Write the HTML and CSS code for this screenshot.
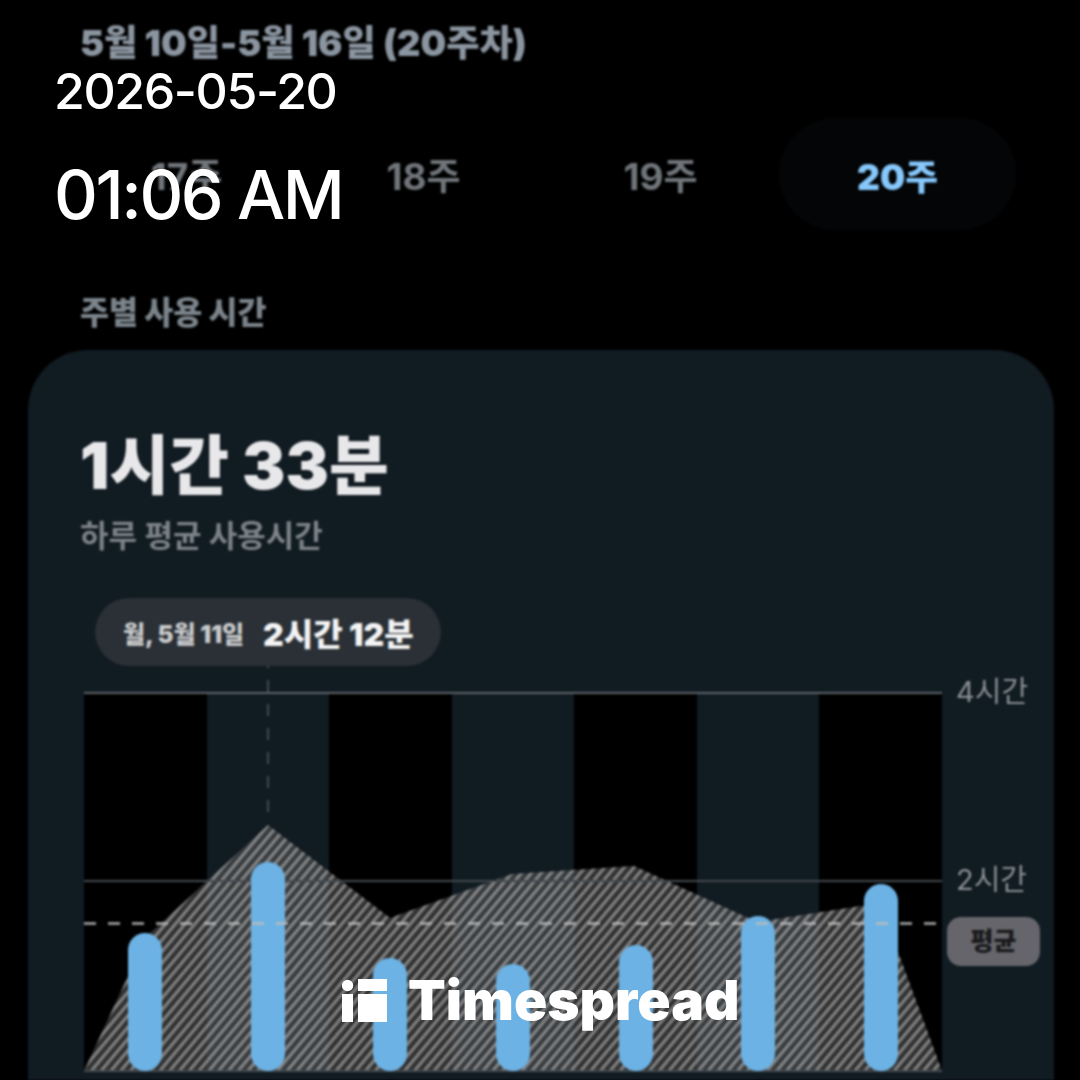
FILE: index.html
```html
<!DOCTYPE html>
<html lang="ko">
<head>
  <meta charset="UTF-8">
  <title>주별 사용 시간</title>
  <link rel="stylesheet" href="styles.css">
</head>
<body>

  <main class="screen">
    <h2 class="date-range">5월 10일-5월 16일 (20주차)</h2>

    <div class="week-tabs">
      <div class="week-tab">17주</div>
      <div class="week-tab">18주</div>
      <div class="week-tab">19주</div>
      <div class="week-tab active">20주</div>
    </div>

    <h3 class="section-title">주별 사용 시간</h3>

    <section class="card">
      <div class="big-time">1시간 33분</div>
      <div class="sub-label">하루 평균 사용시간</div>

      <div class="plot">
        <div class="tooltip">
          <span class="tooltip-date">월, 5월 11일</span>
          <span class="tooltip-value">2시간 12분</span>
        </div>
        <div class="guide"></div>

        <div class="col"><div class="bar" style="height: 138px"></div></div>
        <div class="col"><div class="bar" style="height: 209px"></div></div>
        <div class="col"><div class="bar" style="height: 113px"></div></div>
        <div class="col"><div class="bar" style="height: 107px"></div></div>
        <div class="col"><div class="bar" style="height: 126px"></div></div>
        <div class="col"><div class="bar" style="height: 155px"></div></div>
        <div class="col"><div class="bar" style="height: 187px"></div></div>

        <svg class="area" viewBox="0 0 858 380" width="858" height="380">
          <defs>
            <pattern id="hatch" width="7.5" height="7.5" patternUnits="userSpaceOnUse" patternTransform="rotate(40)">
              <rect width="7.5" height="7.5" fill="#505050" fill-opacity="0.6"/>
              <rect width="3.2" height="7.5" fill="#b8b8b8" fill-opacity="0.6"/>
            </pattern>
          </defs>
          <polygon points="0,379 62,245 184,133 306,226 428,182 550,174 673,230 796,211 858,379" fill="url(#hatch)"/>
          <line x1="0" y1="1" x2="858" y2="1" stroke="#5c6268" stroke-width="2"/>
          <line x1="0" y1="189" x2="858" y2="189" stroke="#43494e" stroke-width="2"/>
          <line x1="0" y1="379" x2="858" y2="379" stroke="#434a50" stroke-width="2"/>
        </svg>

        <div class="avg-line"></div>
        <span class="axis-label axis-4h">4시간</span>
        <span class="axis-label axis-2h">2시간</span>
        <span class="avg-badge">평균</span>
      </div>
    </section>
  </main>

  <div class="stamp">
    <div class="stamp-date">2026-05-20</div>
    <div class="stamp-time">01:06 AM</div>
  </div>

  <div class="brand">
    <svg class="brand-icon" viewBox="0 0 45 43" width="45" height="43">
      <circle cx="5.5" cy="6.5" r="5.7" fill="#fff"/>
      <rect x="0" y="15" width="11" height="28" fill="#fff"/>
      <rect x="16" y="0" width="29" height="12" fill="#fff"/>
      <rect x="16" y="15" width="29" height="28" fill="#fff"/>
    </svg>
    <span class="brand-name">Timespread</span>
  </div>

</body>
</html>
```

FILE: styles.css
```css
html, body {
  margin: 0;
  height: 1080px;
  overflow: hidden;
  background-color: #000;
  font-family: Inter, "Noto Sans CJK KR", sans-serif;
}

.screen {
  height: 1080px;
  overflow: hidden;
  filter: blur(0.8px);
}

.date-range {
  margin: 0 0 32px 80px;
  font-size: 36.2px;
  line-height: 86px;
  font-weight: 900;
  color: #8b95a0;
}

.week-tabs {
  display: grid;
  grid-template-columns: repeat(4, 237px);
  margin-left: 68px;
}

.week-tab {
  display: flex;
  align-items: center;
  justify-content: center;
  height: 112px;
  border-radius: 56px;
  font-size: 37px;
  font-weight: 700;
  color: #70757a;
}

.week-tab.active {
  background-color: #030507;
  color: #86c8fb;
  font-size: 35.5px;
  font-weight: 900;
}

.section-title {
  margin: 62px 0 16px 80px;
  font-size: 31.5px;
  line-height: 42px;
  font-weight: 900;
  color: #7b848b;
}

.card {
  margin-left: 28px;
  width: 1026px;
  height: 800px;
  padding: 76px 0 0 52px;
  box-sizing: border-box;
  background-color: #111b22;
  border-radius: 60px;
}

.big-time {
  font-size: 65px;
  line-height: 80px;
  font-weight: 900;
  color: #e8e8ea;
}

.sub-label {
  margin-top: 8px;
  font-size: 31px;
  line-height: 44px;
  font-weight: 700;
  color: #7d8388;
}

.plot {
  position: relative;
  display: grid;
  grid-template-columns: repeat(7, 1fr);
  width: 858px;
  height: 380px;
  margin: 134px 0 0 4px;
}

.col {
  display: flex;
  align-items: flex-end;
  justify-content: center;
  padding-bottom: 1px;
  background-color: #000;
}

.col:nth-of-type(even) {
  background-color: transparent;
}

.bar {
  position: relative;
  z-index: 2;
  width: 34px;
  border-radius: 17px;
  background-color: #6cb2e4;
}

.area {
  position: absolute;
  top: 0;
  left: 0;
  z-index: 1;
}

.avg-line {
  position: absolute;
  top: 230px;
  left: 0;
  z-index: 3;
  width: 852px;
  height: 3px;
  background: repeating-linear-gradient(90deg, rgba(190, 190, 190, 0.75) 0 12px, transparent 12px 24px);
}

.guide {
  position: absolute;
  top: -36px;
  left: 183px;
  width: 2px;
  height: 160px;
  background: repeating-linear-gradient(180deg, #3d474e 0 12px, transparent 12px 24px);
  z-index: 1;
}

.tooltip {
  position: absolute;
  top: -94px;
  left: 11px;
  z-index: 2;
  display: flex;
  align-items: center;
  gap: 19px;
  width: 346px;
  height: 68px;
  padding-left: 28px;
  box-sizing: border-box;
  border-radius: 34px;
  background-color: #2a3036;
}

.tooltip-date {
  font-size: 24px;
  font-weight: 900;
  white-space: nowrap;
  color: #c9cacb;
}

.tooltip-value {
  font-size: 32px;
  font-weight: 900;
  white-space: nowrap;
  color: #f4f4f5;
}

.axis-label {
  position: absolute;
  left: 872px;
  font-size: 29px;
  line-height: 36px;
  white-space: nowrap;
  color: #8a8f94;
}

.axis-4h {
  top: -18px;
}

.axis-2h {
  top: 170px;
}

.avg-badge {
  position: absolute;
  top: 225px;
  left: 863px;
  width: 93px;
  height: 49px;
  border-radius: 14px;
  background-color: #65656b;
  font-size: 25px;
  line-height: 49px;
  font-weight: 900;
  text-align: center;
  color: #1a1a1c;
}

.stamp {
  position: absolute;
  top: 60px;
  left: 54px;
  color: #fff;
  font-weight: 500;
}

.stamp-date {
  font-size: 50px;
  line-height: 62px;
  letter-spacing: -0.028em;
}

.stamp-time {
  margin-top: 32px;
  font-size: 68px;
  line-height: 80px;
  letter-spacing: -0.036em;
}

.brand {
  position: absolute;
  top: 979px;
  left: 342px;
  display: flex;
  align-items: center;
  gap: 21px;
  color: #fff;
}

.brand-icon {
  display: block;
}

.brand-name {
  font-size: 55px;
  line-height: 43px;
  font-weight: 900;
}
```
